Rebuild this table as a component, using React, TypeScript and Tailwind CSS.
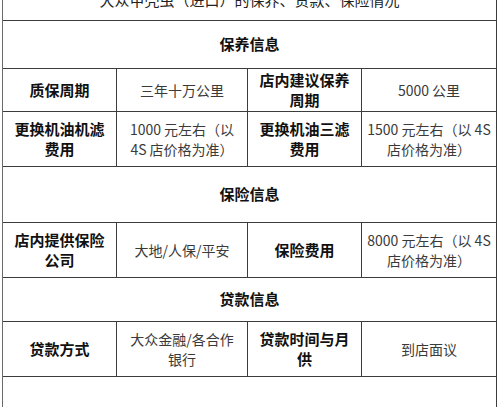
import React from "react";

const font = { fontFamily: '"Noto Sans CJK SC", "Noto Sans", sans-serif' };

function Label({ children }: { children: React.ReactNode }) {
  return (
    <div className="flex items-center justify-center border-r border-b border-[#3c3c3c] text-center text-[15px] leading-[20px] font-bold text-[#111]">
      <div>{children}</div>
    </div>
  );
}

function Value({ children }: { children: React.ReactNode }) {
  return (
    <div className="flex items-center justify-center border-r border-b border-[#3c3c3c] text-center text-[14px] leading-[20px] text-[#3a3a3a]">
      <div>{children}</div>
    </div>
  );
}

function Section({ title, h }: { title: string; h: string }) {
  return (
    <div
      className={`col-span-4 flex items-center justify-center border-r border-b border-[#3c3c3c] text-[15px] font-bold text-[#111] ${h}`}
    >
      {title}
    </div>
  );
}

export default function App() {
  return (
    <div className="h-[407px] w-[500px] overflow-hidden bg-white" style={font}>
      <div className="ml-[2px] grid w-[495px] grid-cols-[114px_131px_114px_135px] border-l border-[#6a6a6a]">
        {/* 标题行，上半部分被裁掉 */}
        <div className="col-span-4 h-[21px] overflow-hidden border-r border-b border-[#3c3c3c]">
          <div className="mt-[-8px] text-center text-[15px] leading-[15px] text-[#222]">
            大众甲壳虫（进口）的保养、贷款、保险情况
          </div>
        </div>

        <Section title="保养信息" h="h-[48px]" />

        <div className="col-span-4 grid h-[43px] grid-cols-subgrid">
          <Label>质保周期</Label>
          <Value>三年十万公里</Value>
          <Label>
            店内建议保养
            <br />
            周期
          </Label>
          <Value>5000 公里</Value>
        </div>

        <div className="col-span-4 grid h-[55px] grid-cols-subgrid">
          <Label>
            更换机油机滤
            <br />
            费用
          </Label>
          <Value>
            1000 元左右（以
            <br />
            4S 店价格为准）
          </Value>
          <Label>
            更换机油三滤
            <br />
            费用
          </Label>
          <Value>
            1500 元左右（以 4S
            <br />
            店价格为准）
          </Value>
        </div>

        <Section title="保险信息" h="h-[56px]" />

        <div className="col-span-4 grid h-[55px] grid-cols-subgrid">
          <Label>
            店内提供保险
            <br />
            公司
          </Label>
          <Value>大地/人保/平安</Value>
          <Label>保险费用</Label>
          <Value>
            8000 元左右（以 4S
            <br />
            店价格为准）
          </Value>
        </div>

        <Section title="贷款信息" h="h-[44px]" />

        <div className="col-span-4 grid h-[55px] grid-cols-subgrid">
          <Label>贷款方式</Label>
          <Value>
            大众金融/各合作
            <br />
            银行
          </Value>
          <Label>
            贷款时间与月
            <br />
            供
          </Label>
          <Value>到店面议</Value>
        </div>

        <div className="col-span-4 h-[40px] border-r border-[#3c3c3c]" />
      </div>
    </div>
  );
}
